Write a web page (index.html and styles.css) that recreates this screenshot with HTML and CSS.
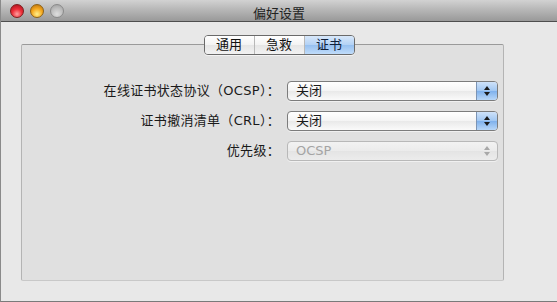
FILE: index.html
```html
<!DOCTYPE html>
<html lang="zh">
<head>
<meta charset="utf-8">
<title>偏好设置</title>
<link rel="stylesheet" href="styles.css">
</head>
<body>
<div class="window">
  <div class="titlebar">
    <div class="lights">
      <span class="light red"></span>
      <span class="light yellow"></span>
      <span class="light gray"></span>
    </div>
    <div class="title">偏好设置</div>
  </div>
  <div class="content">
    <div class="segmented">
      <span class="seg">通用</span>
      <span class="seg">急救</span>
      <span class="seg selected">证书</span>
    </div>
    <div class="panel">
      <div class="form">
        <div class="label">在线证书状态协议（OCSP）：</div>
        <div class="popup"><span class="value">关闭</span><span class="arrows"><svg width="8" height="12" viewBox="0 0 8 12"><path d="M4 1 L7 5 L1 5 Z M4 11 L7 7 L1 7 Z" fill="#1a1a1a"/></svg></span></div>
        <div class="label">证书撤消清单（CRL）：</div>
        <div class="popup"><span class="value">关闭</span><span class="arrows"><svg width="8" height="12" viewBox="0 0 8 12"><path d="M4 1 L7 5 L1 5 Z M4 11 L7 7 L1 7 Z" fill="#1a1a1a"/></svg></span></div>
        <div class="label">优先级：</div>
        <div class="popup disabled"><span class="value">OCSP</span><span class="arrows"><svg width="8" height="12" viewBox="0 0 8 12"><path d="M4 1 L7 5 L1 5 Z M4 11 L7 7 L1 7 Z" fill="#a8a8a8"/></svg></span></div>
      </div>
    </div>
  </div>
</div>
</body>
</html>
```
FILE: styles.css
```css
html, body {
  margin: 0;
  padding: 0;
}
body {
  width: 557px;
  height: 302px;
  overflow: hidden;
  font-family: "DejaVu Sans", "Noto Sans CJK SC", sans-serif;
  font-size: 13px;
  color: #1a1a1a;
}
.window {
  width: 557px;
  height: 302px;
  box-sizing: border-box;
  border-left: 1px solid #8a8a8a;
  border-bottom: 1px solid #7a7a7a;
  display: flex;
  flex-direction: column;
  background: #e8e8e8;
}
.titlebar {
  height: 21px;
  flex: none;
  background: linear-gradient(#d2d2d2, #bababa 40%, #999999);
  border-bottom: 1px solid #4e4e4e;
  display: flex;
  align-items: center;
  position: relative;
}
.lights {
  display: flex;
  gap: 6px;
  padding-left: 9px;
}
.light {
  width: 14px;
  height: 14px;
  border-radius: 50%;
  box-sizing: border-box;
}
.red {
  background: radial-gradient(circle at 50% 75%, #ffa0a0 0, #ee2f3a 45%, #a3101a 100%);
  border: 1px solid #7e1c1c;
}
.yellow {
  background: radial-gradient(circle at 50% 75%, #fff08c 0, #f5a81e 50%, #b06a0c 100%);
  border: 1px solid #8e6214;
}
.gray {
  background: radial-gradient(circle at 50% 75%, #dedede 0, #bcbcbc 55%, #9c9c9c 100%);
  border: 1px solid #8a8a8a;
}
.title {
  position: absolute;
  left: 0;
  right: 0;
  text-align: center;
  top: 3px;
  font-size: 13px;
  color: #222;
  pointer-events: none;
}
.content {
  flex: 1;
  display: flex;
  flex-direction: column;
  align-items: center;
  padding: 13px 0 0 0;
}
.segmented {
  display: flex;
  height: 20px;
  box-sizing: border-box;
  border: 1px solid #6a6a6a;
  border-radius: 4px;
  overflow: hidden;
  position: relative;
  z-index: 1;
  box-shadow: 0 1px 0 rgba(255,255,255,0.6);
}
.seg {
  width: 49px;
  text-align: center;
  line-height: 18px;
  font-size: 13px;
  color: #111;
  background: linear-gradient(#ffffff, #f3f3f3 50%, #e6e6e6 51%, #f2f2f2);
  border-right: 1px solid #b8b8b8;
}
.seg:last-child {
  border-right: 0;
}
.seg.selected {
  background: linear-gradient(#d8e8fa, #b2d1f5 50%, #96c0f0 51%, #c0dcfa);
  color: #10203a;
}
.panel {
  align-self: flex-start;
  margin: -11px 0 0 20px;
  width: 483px;
  height: 237px;
  box-sizing: border-box;
  background: #e0e0e0;
  border: 1px solid #b4b4b4;
  border-top-color: #9a9a9a;
  border-bottom-color: #c8c8c8;
  border-radius: 2px;
  padding: 36px 5px 0 0;
}
.form {
  display: grid;
  grid-template-columns: 1fr 211px;
  column-gap: 7px;
  row-gap: 10px;
  align-items: center;
}
.label {
  text-align: right;
  line-height: 20px;
  letter-spacing: 0.3px;
}
.popup {
  height: 20px;
  box-sizing: border-box;
  border: 1px solid #7c7c7c;
  border-radius: 4px;
  background: linear-gradient(#ffffff, #f4f4f4 50%, #e9e9e9 51%, #fafafa);
  display: flex;
  overflow: hidden;
  box-shadow: 0 1px 0 rgba(255,255,255,0.5);
}
.value {
  flex: 1;
  line-height: 18px;
  padding-left: 8px;
}
.arrows {
  width: 20px;
  display: flex;
  align-items: center;
  justify-content: center;
  background: linear-gradient(#cfe2f9, #9fc6f2 50%, #7fb1ec 51%, #b8d7f8);
  border-left: 1px solid #7c94b4;
}
.popup.disabled {
  border-color: #b8b8b8;
  background: linear-gradient(#f2f2f2, #ebebeb 50%, #e4e4e4 51%, #ececec);
}
.popup.disabled .value {
  color: #a4a4a4;
}
.popup.disabled .arrows {
  background: transparent;
  border-left: 0;
}
```
